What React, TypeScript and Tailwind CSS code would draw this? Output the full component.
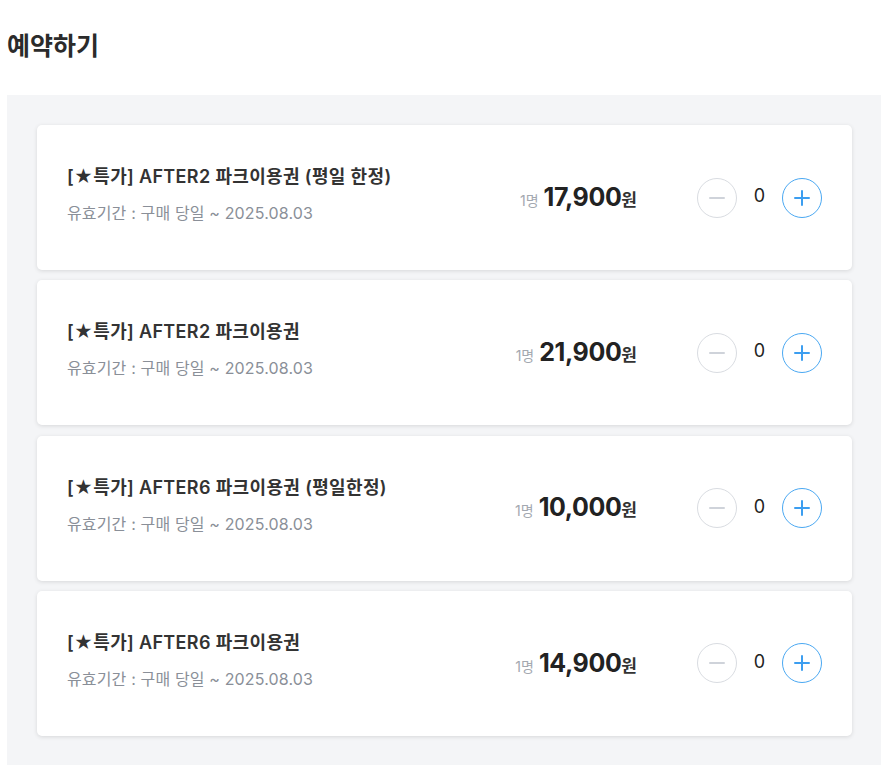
const tickets = [
  { name: '[★특가] AFTER2 파크이용권 (평일 한정)', price: '17,900' },
  { name: '[★특가] AFTER2 파크이용권', price: '21,900' },
  { name: '[★특가] AFTER6 파크이용권 (평일한정)', price: '10,000' },
  { name: '[★특가] AFTER6 파크이용권', price: '14,900' },
]

const font = "font-['Inter','Noto_Sans_CJK_KR',sans-serif]"

function Counter() {
  return (
    <div className="flex items-center">
      <button
        type="button"
        className="flex h-10 w-10 items-center justify-center rounded-full border border-[#d9dce1] bg-white"
      >
        <svg width="20" height="20" viewBox="0 0 20 20" fill="none">
          <path d="M3 10h14" stroke="#cfd3da" strokeWidth="2" strokeLinecap="round" />
        </svg>
      </button>
      <span className="w-[45px] pb-[3px] text-center text-lg text-[#222]">0</span>
      <button
        type="button"
        className="flex h-10 w-10 items-center justify-center rounded-full border border-[#4aa8f2] bg-white"
      >
        <svg width="20" height="20" viewBox="0 0 20 20" fill="none">
          <path d="M10 3v14M3 10h14" stroke="#3c9ef0" strokeWidth="2" strokeLinecap="round" />
        </svg>
      </button>
    </div>
  )
}

function TicketCard({ name, price }: { name: string; price: string }) {
  return (
    <div className="flex h-[145px] items-center rounded-[5px] bg-white px-[30px] shadow-[0_1px_4px_rgba(0,0,0,0.12)]">
      <div className="flex-1 pb-[5px]">
        <p className="text-lg leading-6 font-semibold tracking-[0.35px] text-[#333]">{name}</p>
        <p className="mt-3 text-base leading-6 tracking-[0.15px] text-[#8a8f98]">유효기간 : 구매 당일 ~ 2025.08.03</p>
      </div>
      <div className="mr-[60px] flex items-baseline">
        <span className="mr-[5px] text-sm text-[#a3a8b0]">1명</span>
        <span className="text-[25px] font-bold tracking-[-0.4px] text-[#222]">{price}</span>
        <span className="text-[17px] font-bold text-[#333]">원</span>
      </div>
      <Counter />
    </div>
  )
}

export default function App() {
  return (
    <div className={`${font} min-h-[777px] bg-white pt-[30px]`}>
      <h1 className="ml-[7px] text-[25px] leading-8 font-bold text-[#2b2b2b]">예약하기</h1>
      <div className="mt-[33px] ml-[7px] flex w-[874px] flex-col gap-[10.3px] bg-[#f4f5f7] pt-[30px] pr-[29px] pb-[29px] pl-[30px]">
        {tickets.map((t) => (
          <TicketCard key={t.name} name={t.name} price={t.price} />
        ))}
      </div>
    </div>
  )
}
